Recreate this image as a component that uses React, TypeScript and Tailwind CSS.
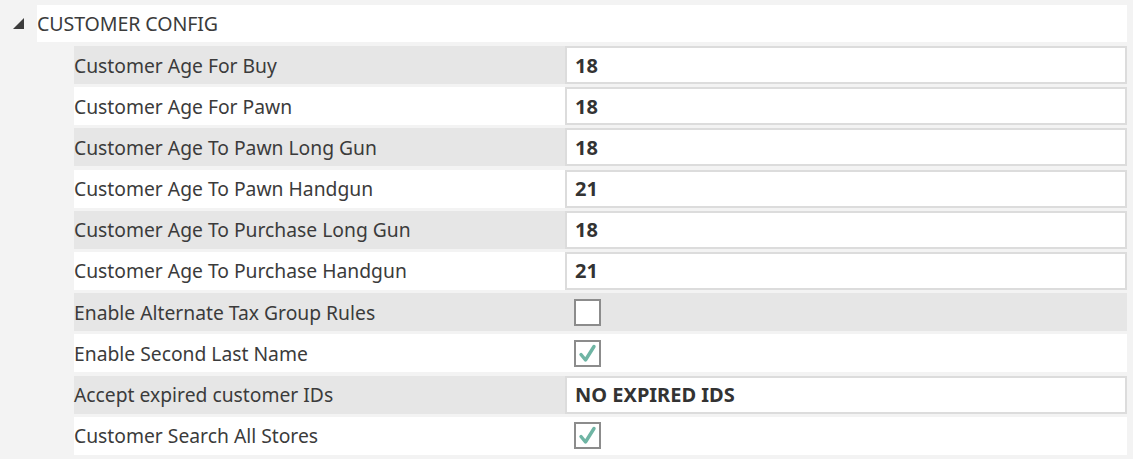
import React from "react";

type Row = {
  label: string;
  kind: "text" | "check";
  value?: string;
  checked?: boolean;
};

const rows: Row[] = [
  { label: "Customer Age For Buy", kind: "text", value: "18" },
  { label: "Customer Age For Pawn", kind: "text", value: "18" },
  { label: "Customer Age To Pawn Long Gun", kind: "text", value: "18" },
  { label: "Customer Age To Pawn Handgun", kind: "text", value: "21" },
  { label: "Customer Age To Purchase Long Gun", kind: "text", value: "18" },
  { label: "Customer Age To Purchase Handgun", kind: "text", value: "21" },
  { label: "Enable Alternate Tax Group Rules", kind: "check", checked: false },
  { label: "Enable Second Last Name", kind: "check", checked: true },
  { label: "Accept expired customer IDs", kind: "text", value: "NO EXPIRED IDS" },
  { label: "Customer Search All Stores", kind: "check", checked: true },
];

const CheckBox = ({ checked }: { checked?: boolean }) => (
  <div className="w-[27px] h-[27px] border-2 border-[#8c8c8c] bg-white flex items-center justify-center">
    {checked && (
      <svg width="19" height="19" viewBox="0 0 19 19">
        <path
          d="M3 10.5 L7.5 16 L16 2.5"
          fill="none"
          stroke="#6fb5a4"
          strokeWidth="3.4"
          strokeLinecap="round"
          strokeLinejoin="round"
        />
      </svg>
    )}
  </div>
);

export default function App() {
  return (
    <div
      className="w-[1133px] h-[459px] bg-[#f3f3f3] pt-[5px] text-[#3b3b3b] overflow-hidden"
      style={{ fontFamily: '"Noto Sans", "Open Sans", sans-serif' }}
    >
      <div className="flex h-[37px] mr-[6px]">
        <div className="w-[37px] flex items-center pl-[13px]">
          <svg width="11" height="11" viewBox="0 0 11 11">
            <polygon points="11,0 11,11 0,11" fill="#3c3c3c" />
          </svg>
        </div>
        <div className="flex-1 bg-white flex items-center text-[19.6px] tracking-[-0.1px]">
          CUSTOMER CONFIG
        </div>
      </div>

      <div className="flex flex-col gap-[3.2px] mt-[4px] pl-[74px] pr-[6px]">
        {rows.map((r, i) => {
          const gray = i % 2 === 0;
          const bg = gray ? "bg-[#e6e6e6]" : "bg-white";
          return (
            <div key={r.label} className="flex h-[38px]">
              <div className={`w-[491px] flex items-center pt-[2px] text-[19.3px] ${bg}`}>
                {r.label}
              </div>
              {r.kind === "text" ? (
                <div className="flex-1 bg-white border-2 border-[#dcdcdc] flex items-center pl-[8px] pt-[1px] text-[20px] font-bold text-[#333]">
                  {r.value}
                </div>
              ) : (
                <div className={`flex-1 flex items-center pl-[9px] ${bg}`}>
                  <CheckBox checked={r.checked} />
                </div>
              )}
            </div>
          );
        })}
      </div>
    </div>
  );
}
